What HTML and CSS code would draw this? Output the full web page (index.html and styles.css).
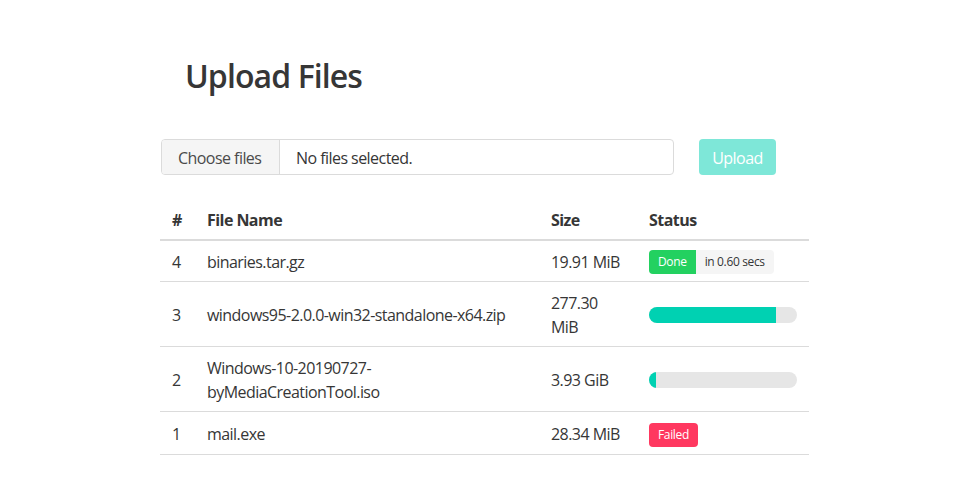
FILE: index.html
```html
<!DOCTYPE html>
<html lang="en">
<head>
<meta charset="utf-8">
<title>Upload Files</title>
<link rel="stylesheet" href="styles.css">
</head>
<body>
<section class="section">
  <div class="container">
    <h1 class="title">Upload Files</h1>
    <div class="upload-row">
      <div class="file">
        <span class="file-cta">Choose files</span>
        <span class="file-name">No files selected.</span>
      </div>
      <button class="button is-primary" disabled>Upload</button>
    </div>
    <table class="table">
      <colgroup>
        <col class="c-num"><col class="c-name"><col class="c-size"><col class="c-status">
      </colgroup>
      <thead>
        <tr><th>#</th><th>File Name</th><th>Size</th><th>Status</th></tr>
      </thead>
      <tbody>
        <tr>
          <td>4</td><td>binaries.tar.gz</td><td>19.91 MiB</td>
          <td><div class="status"><span class="tag is-success addon-left">Done</span><span class="tag is-light addon-right">in 0.60 secs</span></div></td>
        </tr>
        <tr>
          <td>3</td><td>windows95-2.0.0-win32-standalone-x64.zip</td><td>277.30 MiB</td>
          <td><div class="status"><div class="progress"><div class="progress-value" style="width: 86%"></div></div></div></td>
        </tr>
        <tr>
          <td>2</td><td>Windows-10-20190727-byMediaCreationTool.iso</td><td>3.93 GiB</td>
          <td><div class="status"><div class="progress"><div class="progress-value" style="width: 5%"></div></div></div></td>
        </tr>
        <tr>
          <td>1</td><td>mail.exe</td><td>28.34 MiB</td>
          <td><div class="status status-tall"><span class="tag is-danger">Failed</span></div></td>
        </tr>
      </tbody>
    </table>
  </div>
</section>
</body>
</html>
```
FILE: styles.css
```css
html, body {
  margin: 0;
  padding: 0;
  background: #fff;
}
body {
  font-family: "Open Sans", "Noto Sans", sans-serif;
  font-size: 16px;
  line-height: 1.5;
  letter-spacing: -0.55px;
  color: #363636;
}
.section {
  padding: 58px 0 0 0;
}
.container {
  width: 649px;
  margin-left: 160px;
}
.title {
  margin: 0 0 45px 25px;
  font-size: 32px;
  font-weight: 600;
  line-height: 36px;
  letter-spacing: -0.9px;
  color: #363636;
}
.upload-row {
  display: flex;
  align-items: center;
  gap: 25px;
  margin-bottom: 24px;
}
.file {
  display: flex;
  width: 513px;
  height: 36px;
  box-sizing: border-box;
  margin-left: 1px;
  border: 1px solid #dbdbdb;
  border-radius: 4px;
  overflow: hidden;
  color: #4a4a4a;
}
.file-cta {
  display: flex;
  align-items: center;
  box-sizing: border-box;
  width: 118px;
  background: #f5f5f5;
  padding: 2px 0 0 16px;
  border-right: 1px solid #dbdbdb;
  white-space: nowrap;
  flex: none;
}
.file-name {
  display: flex;
  align-items: center;
  padding: 2px 16px 0 16px;
  color: #363636;
  white-space: nowrap;
}
.button {
  font-family: inherit;
  font-size: 16px;
  letter-spacing: -0.55px;
  height: 36px;
  width: 77px;
  padding: 2px 0 0 0;
  border: 0;
  border-radius: 4px;
  color: #fff;
  background: #00d1b2;
  opacity: 0.5;
  cursor: default;
}
.table {
  width: 649px;
  border-collapse: collapse;
  table-layout: fixed;
}
.c-num { width: 35px; }
.c-name { width: 344px; }
.c-size { width: 98px; }
.c-status { width: 172px; }
.table th, .table td {
  padding: 9px 12px 7px;
  text-align: left;
  vertical-align: middle;
  border-bottom: 1px solid #dbdbdb;
}
.table th {
  font-weight: 700;
  border-bottom: 2px solid #dbdbdb;
  color: #363636;
}
.status {
  display: flex;
  align-items: center;
  height: 24px;
}
.status-tall {
  height: 27px;
  align-items: flex-end;
  margin-top: -1px;
}
.tag {
  display: inline-flex;
  align-items: center;
  height: 24px;
  padding: 0 9px;
  font-size: 12px;
  letter-spacing: -0.35px;
  border-radius: 4px;
  white-space: nowrap;
}
.tag.addon-left { border-radius: 4px 0 0 4px; }
.tag.addon-right { border-radius: 0 4px 4px 0; }
.tag.is-success { background: #23d160; color: #fff; }
.tag.is-light { background: #f5f5f5; color: #363636; }
.tag.is-danger { background: #ff3860; color: #fff; }
.progress {
  height: 16px;
  width: 148px;
  background: #e6e6e6;
  border-radius: 8px;
  overflow: hidden;
}
.progress-value {
  height: 100%;
  background: #00d1b2;
}
```
